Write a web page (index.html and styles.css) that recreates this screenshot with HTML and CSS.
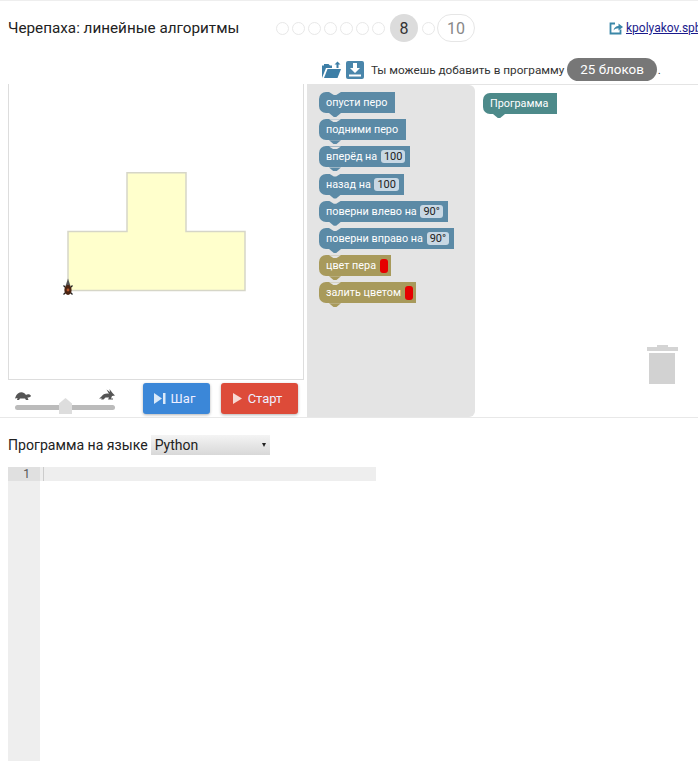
FILE: index.html
```html
<!DOCTYPE html>
<html lang="ru">

<head>
    <meta charset="UTF-8">
    <title>Черепаха: линейные алгоритмы</title>
    <link rel="stylesheet" href="styles.css">
</head>

<body>

    <div class="header">
        <div class="title">Черепаха: линейные алгоритмы</div>
        <div class="steps">
            <span class="dot"></span>
            <span class="dot"></span>
            <span class="dot"></span>
            <span class="dot"></span>
            <span class="dot"></span>
            <span class="dot"></span>
            <span class="dot"></span>
            <span class="step current">8</span>
            <span class="dot"></span>
            <span class="step">10</span>
        </div>
        <div class="ext-link">
            <svg width="14" height="14" viewBox="0 0 14 14">
                <path d="M6 2.5H1.5V12.5H11.5V8.5" fill="none" stroke="#3b87a8" stroke-width="1.8"/>
                <path d="M4.5 9.5C5 6.5 7 5 9.5 5V2.5L14 6L9.5 9.5V7.2C7.5 7.2 5.7 8 4.5 9.5Z" fill="#3b87a8"/>
            </svg>
            <a href="#">kpolyakov.spb.ru</a>
        </div>
    </div>

    <div class="toolbar">
        <svg class="tool-icon" width="20" height="18" viewBox="0 0 20 18">
            <path d="M1 17V4.5H3V3H7.5L9 4.5H11V7H5L1 17Z" fill="#3d7ea6"/>
            <path d="M3 17L6.5 8H20L16.5 17Z" fill="#3d7ea6"/>
            <path d="M15.5 7V3.5H13.5L16.5 0.5L19.5 3.5H17.5V7Z" fill="#3d7ea6"/>
        </svg>
        <svg class="tool-icon" width="18" height="18" viewBox="0 0 18 18">
            <rect width="18" height="18" rx="2" fill="#4a86ab"/>
            <path d="M7 2H11V7H14L9 12L4 7H7Z" fill="#fff"/>
            <rect x="3" y="13.5" width="12" height="2" fill="#fff"/>
        </svg>
        <span class="hint">Ты можешь добавить в программу</span>
        <span class="limit">25 блоков</span>
        <span class="hint-end">.</span>
    </div>

    <div class="main">
        <div class="left-col">
            <div class="canvas">
                <svg width="294" height="295" viewBox="0 0 294 295">
                    <path d="M59 147.5H118V88.75H177V147.5H236V206.5H59Z" fill="#ffffcc" stroke="#d6d6c8" stroke-width="1.5"/>
                    <path d="M59 194.5L56.5 202H61.5Z" fill="#555"/>
                    <path d="M54.5 201.5L63.5 210.5M63.5 201.5L54.5 210.5" stroke="#222" stroke-width="1.3"/>
                    <ellipse cx="59" cy="206" rx="3.6" ry="5" fill="#4a2412"/>
                    <circle cx="59" cy="206" r="1.4" fill="#b5552a"/>
                </svg>
            </div>
            <div class="controls">
                <div class="speed">
                    <div class="speed-icons">
                        <svg width="16" height="9" viewBox="0 0 16 9">
                            <path d="M0.5 6C2 1.5 8 -1 11 4C12 3 15.5 3 16 5C15.5 6.5 13.5 6.5 12.5 6.5L13.5 9H11L10 7.5H5L4 9H2L2.5 7L0 7.5Z" fill="#555"/>
                        </svg>
                        <svg width="16" height="11" viewBox="0 0 16 11">
                            <path d="M0 9.5L2 8C4 5 7 4 10 4.7L7.5 0.5L11 3L10.5 0L13.5 4L16 6.5L13 7L12 9.5H14V10.5H9L10 8.5L6.5 8.5L4.5 10.5H2L3 9.5Z" fill="#555"/>
                        </svg>
                    </div>
                    <div class="slider">
                        <span class="thumb"></span>
                    </div>
                </div>
                <button class="btn btn-step">
                    <svg width="12" height="11" viewBox="0 0 12 11"><path d="M0 0L8 5.5L0 11Z" fill="#dbe9f8"/><rect x="9" width="2.5" height="11" fill="#dbe9f8"/></svg>
                    Шаг
                </button>
                <button class="btn btn-start">
                    <svg width="9" height="11" viewBox="0 0 9 11"><path d="M0 0L9 5.5L0 11Z" fill="#f7d9d3"/></svg>
                    Старт
                </button>
            </div>
        </div>

        <div class="workspace">
            <div class="flyout">
                <div class="block move">опусти перо</div>
                <div class="block move">подними перо</div>
                <div class="block move">вперёд на <span class="field">100</span></div>
                <div class="block move">назад на <span class="field">100</span></div>
                <div class="block move">поверни влево на <span class="field">90°</span></div>
                <div class="block move">поверни вправо на <span class="field">90°</span></div>
                <div class="block paint">цвет пера <span class="swatch"></span></div>
                <div class="block paint">залить цветом <span class="swatch"></span></div>
            </div>
            <div class="program">
                <div class="block hat">Программа</div>
                <svg class="trash" width="31" height="40" viewBox="0 0 31 40">
                    <rect x="0" y="2" width="31" height="4" fill="#d4d4d4"/>
                    <rect x="10" y="0" width="11" height="3" fill="#d4d4d4"/>
                    <rect x="2" y="8" width="26" height="31" fill="#d2d2d2"/>
                </svg>
            </div>
        </div>
    </div>

    <div class="lang-row">
        <span>Программа на языке</span>
        <div class="select-wrap">
            <select class="lang-select">
                <option>Python</option>
            </select>
        </div>
    </div>

    <div class="editor">
        <div class="gutter"><div class="line-num">1</div></div>
        <div class="code">
            <div class="active-line"><span class="cursor"></span></div>
        </div>
    </div>

</body>

</html>
```

FILE: styles.css
```css
body {
    font-family: Roboto, "Liberation Sans", sans-serif;
    margin: 0;
    background-color: white;
    color: #222;
    border-top: 1px solid #eee;
    overflow: hidden;
}

.header {
    display: flex;
    align-items: center;
    height: 54px;
    padding-left: 8px;
}

.title {
    flex: none;
    width: 268px;
    font-size: 15.25px;
}

.steps {
    flex: none;
    display: flex;
    align-items: center;
    gap: 3px;
}

.dot {
    width: 11px;
    height: 11px;
    border: 1px solid #e8e8e8;
    border-radius: 50%;
}

.step {
    display: flex;
    align-items: center;
    justify-content: center;
    min-width: 26px;
    height: 26px;
    margin-left: -1px;
    padding: 0 5px;
    border: 1px solid #e6e6e6;
    border-radius: 14px;
    font-size: 16px;
    color: #888;
}

.step.current {
    min-width: 28px;
    height: 28px;
    margin: 0 1px 0 2px;
    padding: 0;
    border: none;
    background-color: #dcdcdc;
    color: #333;
}

.ext-link {
    flex: none;
    display: flex;
    align-items: center;
    gap: 3px;
    margin-left: 134px;
    white-space: nowrap;
    font-size: 12px;
}

.ext-link a {
    color: #1a1a8c;
}

.toolbar {
    display: flex;
    align-items: center;
    height: 29px;
    padding-left: 321px;
}

.tool-icon {
    margin-right: 5px;
}

.hint {
    margin-left: 2px;
    font-size: 11.75px;
    color: #333;
}

.hint-end {
    margin-left: 1px;
    font-size: 11.75px;
    color: #333;
}

.limit {
    margin-left: 3px;
    padding: 0 13px;
    height: 23px;
    line-height: 23px;
    border-radius: 12px;
    background-color: #777;
    color: white;
    font-size: 13.4px;
}

.main {
    display: flex;
    padding-left: 8px;
    height: 333px;
    border-bottom: 1px solid #e8e8e8;
}

.left-col {
    width: 296px;
}

.canvas {
    width: 294px;
    height: 295px;
    border: 1px solid #ddd;
    border-top: none;
}

.controls {
    display: flex;
    align-items: flex-start;
    padding-top: 3px;
}

.speed {
    width: 100px;
    margin: 5px 28px 0 7px;
}

.speed-icons {
    display: flex;
    justify-content: space-between;
    align-items: flex-end;
    height: 12px;
}

.slider {
    position: relative;
    height: 5px;
    margin-top: 5px;
    border-radius: 3px;
    background-color: #bbb;
}

.thumb {
    position: absolute;
    left: 44px;
    top: -7px;
    width: 13px;
    height: 16px;
    background-color: #ddd;
    clip-path: polygon(50% 0, 100% 35%, 100% 100%, 0 100%, 0 35%);
}

.btn {
    display: flex;
    align-items: center;
    justify-content: center;
    gap: 5px;
    height: 31px;
    border: none;
    border-radius: 3px;
    color: #eef;
    font-family: inherit;
    font-size: 13px;
    box-shadow: 0 1px 3px rgba(0, 0, 0, 0.3);
}

.btn-step {
    width: 67px;
    margin-right: 11px;
    padding: 0 4px 0 0;
    background-color: #3b87d8;
}

.btn-start {
    width: 77px;
    gap: 6px;
    padding: 0 4px 0 0;
    background-color: #dd4b39;
}

.workspace {
    display: flex;
    flex: 1;
    margin-left: 3px;
    border-top: 1px solid #e4e4e4;
}

.flyout {
    display: flex;
    flex-direction: column;
    align-items: flex-start;
    gap: 6.2px;
    width: 156px;
    padding: 7px 0 0 12px;
    border-radius: 0 6px 6px 0;
    background-color: #e4e4e4;
}

.program {
    position: relative;
    flex: 1;
    padding: 7px 0 0 8px;
}

.block {
    position: relative;
    height: 21px;
    padding: 0 8px 0 7px;
    border-radius: 7px 0 0 7px;
    line-height: 21px;
    font-size: 10.8px;
    color: white;
    white-space: nowrap;
}

.block::after {
    content: "";
    position: absolute;
    left: 10px;
    bottom: -4px;
    width: 12px;
    height: 4px;
    background-color: inherit;
    clip-path: polygon(0 0, 100% 0, 60% 100%, 40% 100%);
}

.block::before {
    content: "";
    position: absolute;
    left: 10px;
    top: 0;
    width: 12px;
    height: 3px;
    background-color: #e4e4e4;
    clip-path: polygon(0 0, 100% 0, 60% 100%, 40% 100%);
}

.move {
    background-color: #5b8aa6;
}

.paint {
    background-color: #a89a5b;
}

.hat {
    display: inline-block;
    padding-right: 9px;
    background-color: #4d8a8a;
}

.hat::before {
    display: none;
}

.field {
    display: inline-block;
    height: 13px;
    padding: 0 3px;
    margin: 0 -3px 0 1px;
    border-radius: 3px;
    background-color: #c8d8e4;
    color: #222;
    line-height: 13px;
    font-size: 11px;
}

.swatch {
    display: inline-block;
    width: 8px;
    height: 14px;
    margin: 0 -5px 0 1px;
    border-radius: 3px;
    background-color: #e60000;
    vertical-align: middle;
}

.trash {
    position: absolute;
    right: 20px;
    bottom: 32px;
}

.lang-row {
    display: flex;
    align-items: center;
    gap: 3px;
    height: 48px;
    padding: 6px 0 0 8px;
    box-sizing: border-box;
    font-size: 14.1px;
}

.select-wrap {
    position: relative;
}

.select-wrap::after {
    content: "";
    position: absolute;
    right: 4px;
    top: 8px;
    border-top: 4px solid #222;
    border-left: 2.5px solid transparent;
    border-right: 2.5px solid transparent;
}

.lang-select {
    display: block;
    appearance: none;
    width: 119px;
    height: 20px;
    padding: 0 4px;
    border: none;
    border-radius: 0;
    background: linear-gradient(#f4f4f4, #d8d8d8);
    color: #222;
    font-family: inherit;
    font-size: 14px;
}

.editor {
    display: flex;
    height: 294px;
    margin: 1px 0 0 8px;
}

.gutter {
    width: 32px;
    background-color: #eee;
}

.line-num {
    height: 14px;
    padding-right: 10px;
    text-align: right;
    line-height: 14px;
    font-size: 12px;
    color: #555;
    background-color: #e0e0e0;
}

.code {
    width: 336px;
}

.active-line {
    height: 14px;
    background-color: #eee;
}

.cursor {
    display: block;
    width: 1px;
    height: 14px;
    margin-left: 3px;
    background-color: #ccc;
}
```
